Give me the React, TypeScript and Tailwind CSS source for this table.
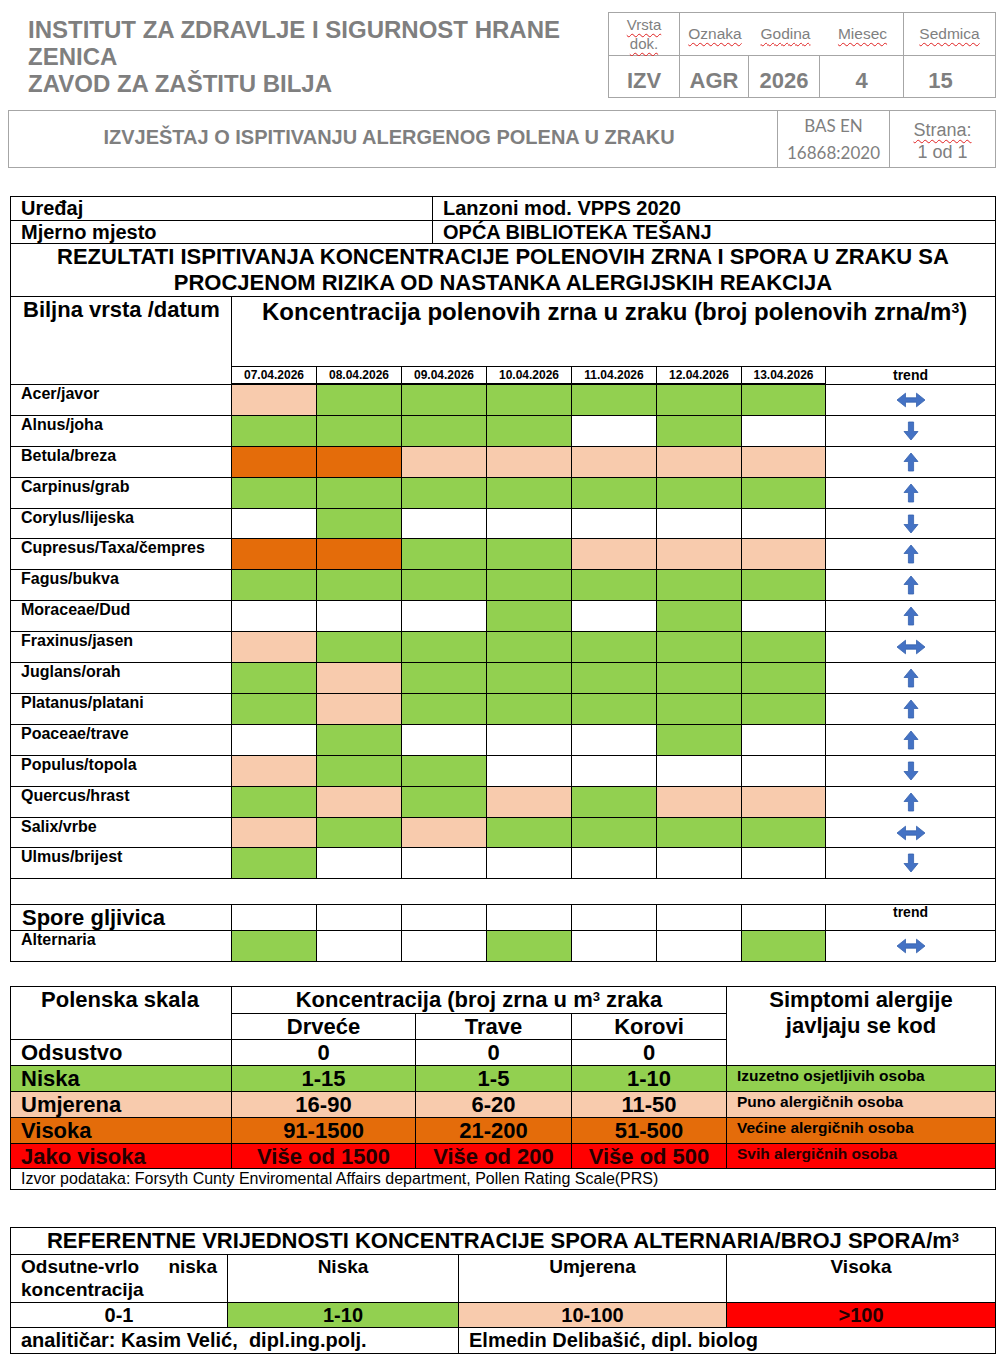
import React from "react";

type Trend = "up" | "down" | "both";

const cellColor: Record<string, string> = {
  G: "bg-[#92d050]",
  O: "bg-[#f8cbad]",
  D: "bg-[#e46c0a]",
  W: "bg-white",
};

const dates = [
  "07.04.2026",
  "08.04.2026",
  "09.04.2026",
  "10.04.2026",
  "11.04.2026",
  "12.04.2026",
  "13.04.2026",
];

const plants: { name: string; cells: string; trend: Trend; h: string }[] = [
  { name: "Acer/javor", cells: "OGGGGGG", trend: "both", h: "h-[30px]" },
  { name: "Alnus/joha", cells: "GGGGWGW", trend: "down", h: "h-[30px]" },
  { name: "Betula/breza", cells: "DDOOOOO", trend: "up", h: "h-[30px]" },
  { name: "Carpinus/grab", cells: "GGGGGGG", trend: "up", h: "h-[30px]" },
  { name: "Corylus/lijeska", cells: "WGWWWWW", trend: "down", h: "h-[29px]" },
  { name: "Cupresus/Taxa/čempres", cells: "DDGGOOO", trend: "up", h: "h-[30px]" },
  { name: "Fagus/bukva", cells: "GGGGGGG", trend: "up", h: "h-[30px]" },
  { name: "Moraceae/Dud", cells: "WWWGWGW", trend: "up", h: "h-[30px]" },
  { name: "Fraxinus/jasen", cells: "OGGGGGG", trend: "both", h: "h-[30px]" },
  { name: "Juglans/orah", cells: "GOGGGGG", trend: "up", h: "h-[30px]" },
  { name: "Platanus/platani", cells: "GOGGGGG", trend: "up", h: "h-[30px]" },
  { name: "Poaceae/trave", cells: "WGWWWGW", trend: "up", h: "h-[30px]" },
  { name: "Populus/topola", cells: "OGGWWWW", trend: "down", h: "h-[30px]" },
  { name: "Quercus/hrast", cells: "GOGOGOO", trend: "up", h: "h-[30px]" },
  { name: "Salix/vrbe", cells: "OGOGGGG", trend: "both", h: "h-[29px]" },
  { name: "Ulmus/brijest", cells: "GWWWWWW", trend: "down", h: "h-[30px]" },
];

const Arrow = ({ dir }: { dir: Trend }) => {
  if (dir === "both") {
    return (
      <svg width="30" height="16" viewBox="0 0 30 16">
        <path
          d="M1 8 L9.5 1.2 L9.5 5.8 L20.5 5.8 L20.5 1.2 L29 8 L20.5 14.8 L20.5 10.2 L9.5 10.2 L9.5 14.8 Z"
          fill="#4472c4"
          stroke="#3461ad"
          strokeWidth="0.8"
          strokeLinejoin="round"
        />
      </svg>
    );
  }
  return (
    <svg
      width="16"
      height="20"
      viewBox="0 0 16 20"
      className={dir === "down" ? "rotate-180" : ""}
    >
      <path
        d="M8 1 L15 9.5 L10.6 9.5 L10.6 19 L5.4 19 L5.4 9.5 L1 9.5 Z"
        fill="#4472c4"
        stroke="#3461ad"
        strokeWidth="0.8"
        strokeLinejoin="round"
      />
    </svg>
  );
};

const spell = "underline decoration-wavy decoration-[#e02020] decoration-1 underline-offset-[3px]";
const darkRed = "text-[#240000]";

const App = () => {
  return (
    <div className="w-[1000px] min-h-[1355px] bg-white font-['Liberation_Sans',Arial,sans-serif] text-black pb-[2px]">
      {/* Header */}
      <div className="flex items-start">
        <div className="pl-[28px] pt-[16px] text-[24px] leading-[27px] font-bold text-[#7f7f7f]">
          <div>INSTITUT ZA ZDRAVLJE I SIGURNOST HRANE</div>
          <div>ZENICA</div>
          <div>ZAVOD ZA ZAŠTITU BILJA</div>
        </div>
        <div className="ml-auto mr-[4px] mt-[12px] bg-[#a6a6a6] p-px grid grid-cols-[70px_68px_70px_83px_91px] grid-rows-[42px_41px] gap-px text-[#7f7f7f]">
          <div className="bg-white flex flex-col items-center justify-center text-[15px] leading-[19px]">
            <span className={spell}>Vrsta</span>
            <span className={spell}>dok.</span>
          </div>
          <div className="col-span-3 bg-white grid grid-cols-[70px_71px_83px] items-center text-[15.5px] text-center">
            <span className={spell}>Oznaka</span>
            <span className={spell}>Godina</span>
            <span className={spell}>Miesec</span>
          </div>
          <div className="bg-white flex items-center justify-center text-[15.5px]">
            <span className={spell}>Sedmica</span>
          </div>
          {["IZV", "AGR", "2026", "4", "15"].map((v, i) => (
            <div
              key={i}
              className={`bg-white flex items-center justify-center pt-[8px] text-[22px] font-bold ${i === 4 ? "pr-[18px]" : ""}`}
            >
              {v}
            </div>
          ))}
        </div>
      </div>

      <div className="ml-[8px] mt-[12px] w-[988px] bg-[#a6a6a6] p-px grid grid-cols-[768px_111px_105px] gap-px h-[58px] text-[#7f7f7f]">
        <div className="bg-white flex items-center justify-center pr-[8px] pb-[4px] text-[20px] font-bold">
          IZVJEŠTAJ O ISPITIVANJU ALERGENOG POLENA U ZRAKU
        </div>
        <div className="bg-white flex flex-col items-center justify-center font-['Lato',sans-serif] text-[17px] leading-[27px]">
          <span>BAS EN</span>
          <span>16868:2020</span>
        </div>
        <div className="bg-white flex flex-col items-center pt-[8px] text-[18px] leading-[22px]">
          <span className={spell}>Strana:</span>
          <span>1 od 1</span>
        </div>
      </div>

      {/* Main results table */}
      <div className="ml-[10px] mt-[28px] w-[986px] bg-black p-px flex flex-col gap-px">
        <div className="grid grid-cols-[421px_1fr] gap-px h-[23px] text-[20px] font-bold leading-[23px]">
          <div className="bg-white pl-[10px]">Uređaj</div>
          <div className="bg-white pl-[10px]">Lanzoni mod. VPPS 2020</div>
        </div>
        <div className="grid grid-cols-[421px_1fr] gap-px h-[22px] text-[20px] font-bold leading-[22px]">
          <div className="bg-white pl-[10px]">Mjerno mjesto</div>
          <div className="bg-white pl-[10px]">OPĆA BIBLIOTEKA TEŠANJ</div>
        </div>
        <div className="bg-white h-[52px] text-center text-[22px] font-bold leading-[26px]">
          <div>REZULTATI ISPITIVANJA KONCENTRACIJE POLENOVIH ZRNA I SPORA U ZRAKU SA</div>
          <div>PROCJENOM RIZIKA OD NASTANKA ALERGIJSKIH REAKCIJA</div>
        </div>
        <div className="grid grid-cols-[220px_84px_84px_84px_84px_84px_84px_83px_169px] gap-px">
          <div className="row-span-2 bg-white pl-[12px] pt-[1px] text-[22px] font-bold leading-[24px]">
            Biljna vrsta /datum
          </div>
          <div className="col-span-8 h-[69px] bg-white pl-[30px] pt-[2px] text-[24px] font-bold leading-[26px]">
            Koncentracija polenovih zrna u zraku (broj polenovih zrna/m<sup className="text-[14px]">3</sup>)
          </div>
          {dates.map((d) => (
            <div key={d} className="h-[16px] bg-white text-center text-[12px] font-bold leading-[16px]">
              {d}
            </div>
          ))}
          <div className="bg-white text-center text-[14px] font-bold leading-[17px]">trend</div>

          {plants.map((p) => (
            <React.Fragment key={p.name}>
              <div className={`${p.h} bg-white pl-[10px] text-[16px] font-bold leading-[18px]`}>
                {p.name}
              </div>
              {p.cells.split("").map((c, i) => (
                <div key={i} className={cellColor[c]} />
              ))}
              <div className="bg-white flex items-center justify-center">
                <Arrow dir={p.trend} />
              </div>
            </React.Fragment>
          ))}

          <div className="col-span-9 h-[25px] bg-white" />

          <div className="h-[25px] bg-white pl-[11px] text-[22px] font-bold leading-[25px]">Spore gljivica</div>
          {dates.map((d) => (
            <div key={d} className="bg-white" />
          ))}
          <div className="bg-white text-center text-[14px] font-bold leading-[15px]">trend</div>

          <div className="h-[30px] bg-white pl-[10px] text-[16px] font-bold leading-[18px]">Alternaria</div>
          {"GWWGWWG".split("").map((c, i) => (
            <div key={i} className={cellColor[c]} />
          ))}
          <div className="bg-white flex items-center justify-center">
            <Arrow dir="both" />
          </div>
        </div>
      </div>

      {/* Pollen scale */}
      <div className="ml-[10px] mt-[24px] w-[986px] bg-black p-px grid grid-cols-[220px_183px_155px_154px_268px] grid-rows-[26px_25px_25px_25px_25px_25px_24px_20px] gap-px text-[22px] font-bold leading-[25px]">
        <div className="row-span-2 bg-white text-center pr-[2px] leading-[26px]">Polenska skala</div>
        <div className="col-span-3 bg-white text-center leading-[26px]">
          Koncentracija (broj zrna u m<sup className="text-[13px]">3</sup> zraka
        </div>
        <div className="row-span-3 bg-white text-center leading-[26px]">
          <div>Simptomi alergije</div>
          <div>javljaju se kod</div>
        </div>
        <div className="bg-white text-center">Drveće</div>
        <div className="bg-white text-center">Trave</div>
        <div className="bg-white text-center">Korovi</div>

        <div className="bg-white pl-[10px]">Odsustvo</div>
        <div className="bg-white text-center">0</div>
        <div className="bg-white text-center">0</div>
        <div className="bg-white text-center">0</div>

        <div className="bg-[#92d050] pl-[10px]">Niska</div>
        <div className="bg-[#92d050] text-center">1-15</div>
        <div className="bg-[#92d050] text-center">1-5</div>
        <div className="bg-[#92d050] text-center">1-10</div>
        <div className="bg-[#92d050] pl-[10px] text-[15.5px] leading-[20px]">Izuzetno osjetljivih osoba</div>

        <div className="bg-[#f8cbad] pl-[10px]">Umjerena</div>
        <div className="bg-[#f8cbad] text-center">16-90</div>
        <div className="bg-[#f8cbad] text-center">6-20</div>
        <div className="bg-[#f8cbad] text-center">11-50</div>
        <div className="bg-[#f8cbad] pl-[10px] text-[15.5px] leading-[20px]">Puno alergičnih osoba</div>

        <div className="bg-[#e46c0a] pl-[10px]">Visoka</div>
        <div className="bg-[#e46c0a] text-center">91-1500</div>
        <div className="bg-[#e46c0a] text-center">21-200</div>
        <div className="bg-[#e46c0a] text-center">51-500</div>
        <div className="bg-[#e46c0a] pl-[10px] text-[15.5px] leading-[20px]">Većine alergičnih osoba</div>

        <div className={`bg-[#ff0000] pl-[10px] leading-[25px] ${darkRed}`}>Jako visoka</div>
        <div className={`bg-[#ff0000] text-center leading-[25px] ${darkRed}`}>Više od 1500</div>
        <div className={`bg-[#ff0000] text-center leading-[25px] ${darkRed}`}>Više od 200</div>
        <div className={`bg-[#ff0000] text-center leading-[25px] ${darkRed}`}>Više od 500</div>
        <div className={`bg-[#ff0000] pl-[10px] text-[15.5px] leading-[19px] ${darkRed}`}>Svih alergičnih osoba</div>

        <div className="col-span-5 bg-white pl-[10px] text-[16px] font-normal leading-[20px]">
          Izvor podataka: Forsyth Cunty Enviromental Affairs department, Pollen Rating Scale(PRS)
        </div>
      </div>

      {/* Alternaria reference */}
      <div className="ml-[10px] mt-[37px] w-[986px] bg-black p-px grid grid-cols-[216px_230px_267px_268px] grid-rows-[26px_47px_24px_25px] gap-px text-[19px] font-bold leading-[23px]">
        <div className="col-span-4 bg-white text-center text-[22px] leading-[26px]">
          REFERENTNE VRIJEDNOSTI KONCENTRACIJE SPORA ALTERNARIA/BROJ SPORA/m<sup className="text-[13px]">3</sup>
        </div>
        <div className="bg-white pl-[10px] pr-[10px]">
          <div className="flex justify-between">
            <span>Odsutne-vrlo</span>
            <span>niska</span>
          </div>
          <div>koncentracija</div>
        </div>
        <div className="bg-white text-center">Niska</div>
        <div className="bg-white text-center">Umjerena</div>
        <div className="bg-white text-center">Visoka</div>

        <div className="bg-white text-center text-[20px] leading-[24px]">0-1</div>
        <div className="bg-[#92d050] text-center text-[20px] leading-[24px]">1-10</div>
        <div className="bg-[#f8cbad] text-center text-[20px] leading-[24px]">10-100</div>
        <div className={`bg-[#ff0000] text-center text-[20px] leading-[24px] ${darkRed}`}>&gt;100</div>

        <div className="col-span-2 bg-white pl-[10px] text-[20px] leading-[25px]">
          analitičar: Kasim Velić,&nbsp; dipl.ing.polj.
        </div>
        <div className="col-span-2 bg-white pl-[10px] text-[20px] leading-[25px]">
          Elmedin Delibašić, dipl. biolog
        </div>
      </div>
    </div>
  );
};

export default App;
